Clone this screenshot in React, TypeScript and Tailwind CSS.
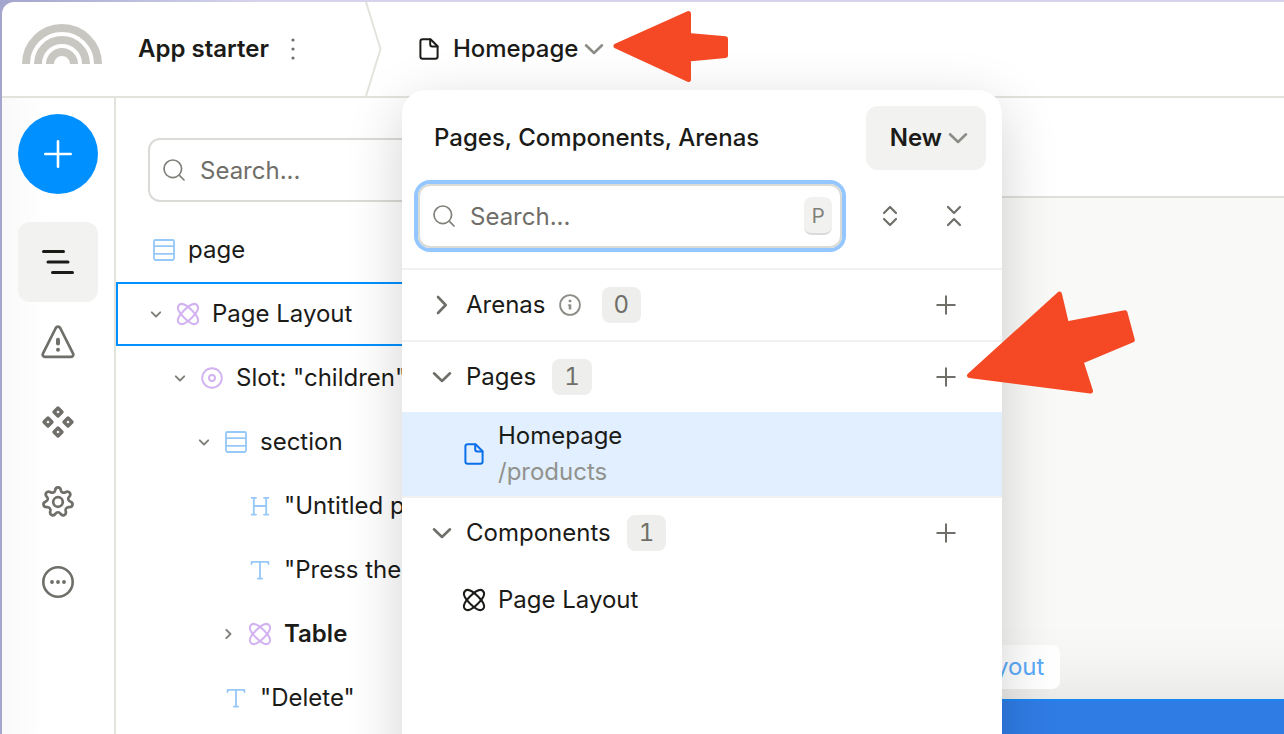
import type { ReactNode } from "react";

type IconProps = { className?: string };

function Svg({ className, box, children, width = 2 }: { className?: string; box: string; children: ReactNode; width?: number }) {
  return (
    <svg
      viewBox={box}
      className={className}
      fill="none"
      stroke="currentColor"
      strokeWidth={width}
      strokeLinecap="round"
      strokeLinejoin="round"
      aria-hidden="true"
    >
      {children}
    </svg>
  );
}

const Logo = () => (
  <svg viewBox="0 0 80 40" className="h-10 w-20 shrink-0" fill="none" stroke="#c8c7c1" strokeWidth="8" aria-hidden="true">
    <path d="M4 40a36 36 0 0 1 72 0" />
    <path d="M16 40a24 24 0 0 1 48 0" />
    <path d="M28 40a12 12 0 0 1 24 0" />
  </svg>
);

const FileIcon = ({ className }: IconProps) => (
  <Svg box="0 0 24 24" className={className}>
    <path d="M13.500 2.300H5.700a2.300 2.300 0 0 0-2.300 2.300v14.800a2.300 2.300 0 0 0 2.300 2.300h12.600a2.300 2.300 0 0 0 2.300-2.300V9.300z" />
    <path d="M13.200 2.500v5a2 2 0 0 0 2 2h5.200" />
  </Svg>
);

const SearchIcon = ({ className }: IconProps) => (
  <Svg box="0 0 24 24" className={className} width={1.7}>
    <circle cx="10.800" cy="10.800" r="8.800" />
    <path d="m17.200 17.200 4.800 4.800" />
  </Svg>
);

const ChevronWide = ({ className }: IconProps) => (
  <Svg box="0 0 24 24" className={className} width={2.6}>
    <path d="m4 8.300 8 7.700 8-7.700" />
  </Svg>
);

const ChevronRightWide = ({ className }: IconProps) => (
  <Svg box="0 0 24 24" className={className} width={2.6}>
    <path d="m8 4 7.700 8-7.700 8" />
  </Svg>
);

const ChevronSmall = ({ className }: IconProps) => (
  <Svg box="0 0 16 16" className={className} width={1.9}>
    <path d="m3.800 6.300 4.200 4.200 4.200-4.200" />
  </Svg>
);

const ChevronSmallRight = ({ className }: IconProps) => (
  <Svg box="0 0 16 16" className={className} width={1.9}>
    <path d="m6.300 3.800 4.200 4.200-4.200 4.200" />
  </Svg>
);

const PlusIcon = ({ className }: IconProps) => (
  <svg viewBox="0 0 20 20" className={className} fill="none" stroke="currentColor" strokeWidth="2" aria-hidden="true">
    <path d="M10 0.500v19M0.500 10h19" />
  </svg>
);

const orbit = "M-12.700 0C-12.700-4.200-5.500-5.400 0-5.400S12.700-4.200 12.700 0 5.500 5.400 0 5.400-12.700 4.200-12.700 0Z";

const AtomIcon = ({ className }: IconProps) => (
  <Svg box="0 0 24 24" className={className} width={2}>
    <path d={orbit} transform="translate(12 12) rotate(45)" />
    <path d={orbit} transform="translate(12 12) rotate(-45)" />
  </Svg>
);

const RowsIcon = ({ className }: IconProps) => (
  <Svg box="0 0 24 24" className={className} width={1.8}>
    <rect x="2" y="2" width="20" height="20" rx="1.500" />
    <path d="M2 8.200h20M2 15.800h20" />
  </Svg>
);

const SlotIcon = ({ className }: IconProps) => (
  <Svg box="0 0 24 24" className={className} width={1.9}>
    <circle cx="12" cy="12" r="9.800" />
    <circle cx="12" cy="12" r="3" />
  </Svg>
);

const HeadingIcon = ({ className }: IconProps) => (
  <Svg box="0 0 24 24" className={className} width={1.8}>
    <path d="M5.800 3.800v16.800M18.200 3.800v16.800M5.800 12h12.400M3.600 3.800H8M16 3.800h4.400M3.600 20.600H8M16 20.600h4.400" />
  </Svg>
);

const TextIcon = ({ className }: IconProps) => (
  <Svg box="0 0 24 24" className={className} width={1.8}>
    <path d="M3.600 6V3.800h16.800V6M12 3.800v16.800M9.800 20.600h4.400" />
  </Svg>
);

const InfoIcon = ({ className }: IconProps) => (
  <Svg box="0 0 24 24" className={className} width={1.8}>
    <circle cx="12" cy="12" r="9.900" />
    <path d="M12 11.500V16.500" strokeWidth="2.600" strokeLinecap="butt" />
    <path d="M12 6.800v2.400" strokeWidth="2.600" strokeLinecap="butt" />
    <path d="M10.300 12.100H12" strokeWidth="1.200" />
  </Svg>
);

const OutlineIcon = ({ className }: IconProps) => (
  <Svg box="0 0 40 40" className={className} width={3}>
    <path d="M5.500 9.500h20M10 20h20M14.500 30.500h20" />
  </Svg>
);

const WarningIcon = ({ className }: IconProps) => (
  <Svg box="0 0 40 40" className={className} width={2.7}>
    <path d="M17.800 6 4.900 31.600A2.200 2.200 0 0 0 6.900 34.800h26.200a2.200 2.200 0 0 0 2-3.200L22.200 6a2.500 2.500 0 0 0-4.400 0z" />
    <path d="M20 17.800v3.700" strokeWidth="4" />
    <path d="M20 27.800v.01" strokeWidth="4" />
  </Svg>
);

const DiamondsIcon = ({ className }: IconProps) => (
  <Svg box="0 0 40 40" className={className} width={3.4}>
    <path d="m20 6 4 4-4 4-4-4z" />
    <path d="m20 26 4 4-4 4-4-4z" />
    <path d="m10 16 4 4-4 4-4-4z" />
    <path d="m30 16 4 4-4 4-4-4z" />
  </Svg>
);

const GearIcon = ({ className }: IconProps) => (
  <Svg box="0 0 40 40" className={className} width={2.7}>
    <circle cx="20" cy="20" r="4.800" />
    <path d="M17.200 8.200C17.600 4.300 22.400 4.300 22.800 8.200C23.200 10.300 25.500 11.300 27.400 10.300C31 8.400 33.900 11.800 31.100 14.900C29.600 16.500 30.200 18.800 32.200 19.600C35.900 21 34.900 25.500 30.900 25.200C28.700 25 27.200 26.900 27.700 29C28.800 32.900 24.800 34.900 22.400 31.600C21.300 29.800 18.700 29.800 17.600 31.600C15.200 34.900 11.200 32.900 12.300 29C12.800 26.900 11.300 25 9.100 25.200C5.100 25.500 4.100 21 7.800 19.600C9.800 18.800 10.400 16.500 8.900 14.900C6.100 11.800 9 8.400 12.600 10.300C14.500 11.300 16.800 10.300 17.200 8.200Z" />
  </Svg>
);

const MoreIcon = ({ className }: IconProps) => (
  <Svg box="0 0 40 40" className={className} width={2.6}>
    <circle cx="20" cy="20" r="14.700" />
    <path d="M14 20h.01M20 20h.01M26 20h.01" strokeWidth="3.800" />
  </Svg>
);

const ExpandIcon = ({ className }: IconProps) => (
  <Svg box="0 0 24 24" className={className} width={2.2}>
    <path d="m6 9 6-6 6 6M6 15l6 6 6-6" />
  </Svg>
);

const CollapseIcon = ({ className }: IconProps) => (
  <Svg box="0 0 24 24" className={className} width={2.2}>
    <path d="m6 3 6 6 6-6M6 21l6-6 6 6" />
  </Svg>
);

type TreeKind = "rows" | "atom" | "slot" | "heading" | "text";
type TreeItem = { label: string; kind: TreeKind; indent: string; open?: boolean; closed?: boolean; selected?: boolean; bold?: boolean };

const tree: TreeItem[] = [
  { label: "page", kind: "rows", indent: "pl-[6px]" },
  { label: "Page Layout", kind: "atom", indent: "pl-[30px]", open: true, selected: true },
  { label: 'Slot: "children"', kind: "slot", indent: "pl-[54px]", open: true },
  { label: "section", kind: "rows", indent: "pl-[78px]", open: true },
  { label: '"Untitled page"', kind: "heading", indent: "pl-[102px]" },
  { label: '"Press the button"', kind: "text", indent: "pl-[102px]" },
  { label: "Table", kind: "atom", indent: "pl-[102px]", closed: true, bold: true },
  { label: '"Delete"', kind: "text", indent: "pl-[78px]" },
];

const kindIcon = {
  rows: <RowsIcon className="size-6 text-[#96c8f8]" />,
  atom: <AtomIcon className="size-6 overflow-visible text-[#d2b2f0]" />,
  slot: <SlotIcon className="size-6 text-[#d2b2f0]" />,
  heading: <HeadingIcon className="size-6 text-[#96c8f8]" />,
  text: <TextIcon className="size-6 text-[#96c8f8]" />,
};

function TreeRow({ item }: { item: TreeItem }) {
  return (
    <li>
      <button
        className={`flex h-16 w-full items-center gap-3 border-2 text-left whitespace-nowrap ${item.indent} ${item.selected ? "border-[#0090ff]" : "border-transparent"} ${item.bold ? "font-semibold" : ""}`}
      >
        <span className="size-4 shrink-0 text-[#80807b]">
          {item.open && <ChevronSmall className="size-4" />}
          {item.closed && <ChevronSmallRight className="size-4" />}
        </span>
        <span className="shrink-0">{kindIcon[item.kind]}</span>
        {item.label}
      </button>
    </li>
  );
}

function Count({ value }: { value: number }) {
  return <span className="flex h-9 items-center rounded-lg bg-[#eeeeec] px-3 text-[#6f6e69] tabular-nums">{value}</span>;
}

function Section({ title, count, open, info, children }: { title: string; count: number; open?: boolean; info?: boolean; children?: ReactNode }) {
  return (
    <section className="border-t-2 border-[#f1f1f0]">
      <div className="flex h-[70px] items-center pr-9 pl-7">
        <button className="flex items-center gap-3">
          {open ? <ChevronWide className="size-6 text-[#6f6e69]" /> : <ChevronRightWide className="size-6 text-[#6f6e69]" />}
          {title}
        </button>
        {info && <InfoIcon className="mr-1 ml-3 size-6 text-[#8d8d88]" />}
        <div className="ml-4">
          <Count value={count} />
        </div>
        <button aria-label={`Add to ${title}`} className="ml-auto flex size-10 items-center justify-center text-[#6f6e69]">
          <PlusIcon className="size-5" />
        </button>
      </div>
      {children}
    </section>
  );
}

function PagesPopover() {
  return (
    <div className="absolute top-[88px] left-[400px] z-20 flex h-[720px] w-[600px] flex-col rounded-[24px] bg-white shadow-[0_16px_56px_rgba(0,0,0,0.18)]">
      <div className="flex items-center justify-between p-4 pb-[14px] pl-8">
        <h2 className="font-medium">Pages, Components, Arenas</h2>
        <button className="flex h-16 items-center gap-1 rounded-xl bg-[#f2f2f0] pr-4 pl-6 font-semibold">
          New
          <ChevronWide className="size-6 text-[#8d8d88]" />
        </button>
      </div>
      <div className="flex items-center px-4 pb-5">
        <label className="mr-4 flex h-16 min-w-0 flex-1 items-center rounded-xl border-2 border-[#dadad6] px-2 pl-3 ring-4 ring-[#94c6ff]">
          <SearchIcon className="size-6 shrink-0 text-[#80807b]" />
          <input
            aria-label="Search pages"
            placeholder="Search..."
            className="ml-[14px] min-w-0 flex-1 pt-[2px] outline-none placeholder:text-[#6f6e69]"
          />
          <kbd className="flex h-[38px] w-7 items-center justify-center rounded-lg border-b-2 border-[#dadad8] bg-[#f1f1ef] pt-[2px] font-['Roboto',sans-serif] text-xl text-[#80807b]">
            P
          </kbd>
        </label>
        <button aria-label="Expand all" className="flex size-16 items-center justify-center text-[#6f6e69]">
          <ExpandIcon className="size-6" />
        </button>
        <button aria-label="Collapse all" className="flex size-16 items-center justify-center text-[#6f6e69]">
          <CollapseIcon className="size-6" />
        </button>
      </div>
      <Section title="Arenas" count={0} info />
      <Section title="Pages" count={1} open>
        <button className="flex w-full items-center gap-3 bg-[#e1efff] py-[6px] pl-[60px] text-left leading-9">
          <FileIcon className="size-6 text-[#0a6fe8]" />
          <span className="flex flex-col">
            <span>Homepage</span>
            <span className="text-[#92928d]">/products</span>
          </span>
        </button>
      </Section>
      <Section title="Components" count={1} open>
        <button className="flex h-16 w-full items-center gap-3 pl-[60px] text-left">
          <AtomIcon className="size-6 overflow-visible" />
          Page Layout
        </button>
      </Section>
    </div>
  );
}

const railButton = "flex size-20 items-center justify-center rounded-xl text-[#6f6e69]";

export default function App() {
  return (
    <div className="h-screen overflow-hidden bg-linear-to-r from-[#a3a5cd] to-[#d6d4ec] to-20% pt-[2px] pl-[2px] font-['Inter',sans-serif] text-2xl text-[#1b1b18]">
      <div className="relative flex h-full flex-col overflow-hidden rounded-tl-xl bg-white">
        <header className="flex h-24 shrink-0 items-center border-b-2 border-[#e3e3de] pl-5">
          <div className="-mt-[10px]">
            <Logo />
          </div>
          <h1 className="ml-9 font-semibold">App starter</h1>
          <button aria-label="Project menu" className="ml-3 flex h-10 w-6 items-center justify-center text-[#6f6e69]">
            <svg viewBox="0 0 24 24" className="size-6" fill="currentColor" aria-hidden="true">
              <circle cx="12" cy="3" r="1.600" />
              <circle cx="12" cy="12" r="1.600" />
              <circle cx="12" cy="21" r="1.600" />
            </svg>
          </button>
          <svg viewBox="0 0 18 94" className="ml-[60px] h-[94px] w-[18px] shrink-0" fill="none" stroke="#e3e3de" strokeWidth="2" aria-hidden="true">
            <path d="M1 0l14.500 47L1 94" />
          </svg>
          <button className="ml-[34px] flex items-center font-medium">
            <FileIcon className="mr-3 size-6" />
            Homepage
            <ChevronWide className="ml-1 size-6 text-[#8d8d88]" />
          </button>
        </header>

        <div className="flex min-h-0 flex-1">
          <nav className="flex w-[114px] shrink-0 flex-col items-start border-r-2 border-[#e3e3de] bg-linear-to-r from-[#f9f9f9] to-white to-40% p-4">
            <button aria-label="Add" className="mb-7 flex size-20 items-center justify-center rounded-full bg-[#0090ff] text-white">
              <Svg box="0 0 28 28" className="size-7" width={2.6}>
                <path d="M14 1.300v25.400M1.300 14h25.400" />
              </Svg>
            </button>
            <button aria-label="Outline" className="flex size-20 items-center justify-center rounded-xl bg-[#f2f2f0] text-[#1b1b18]">
              <OutlineIcon className="size-10" />
            </button>
            <button aria-label="Issues" className={railButton}>
              <WarningIcon className="size-10" />
            </button>
            <button aria-label="Components" className={railButton}>
              <DiamondsIcon className="size-10" />
            </button>
            <button aria-label="Settings" className={railButton}>
              <GearIcon className="size-10" />
            </button>
            <button aria-label="More" className={railButton}>
              <MoreIcon className="size-10" />
            </button>
          </nav>

          <aside className="w-[600px] shrink-0 overflow-hidden pt-10">
            <label className="mx-8 mb-4 flex h-16 items-center rounded-xl border-2 border-[#dadad6] pl-3">
              <SearchIcon className="size-6 shrink-0 text-[#80807b]" />
              <input
                aria-label="Search elements"
                placeholder="Search..."
                className="ml-[14px] min-w-0 flex-1 pt-[2px] outline-none placeholder:text-[#6f6e69]"
              />
            </label>
            <ul>
              {tree.map((item) => (
                <TreeRow key={item.label} item={item} />
              ))}
            </ul>
          </aside>

          <main className="flex min-w-0 flex-1 flex-col overflow-hidden">
            <div className="h-[100px] shrink-0 border-b-2 border-[#dfdfdc]" />
            <div className="flex flex-1 flex-col items-start bg-[#f9f9f7] pt-[447px] pl-[172px]">
              <span className="relative z-10 mb-[10px] flex h-11 shrink-0 items-center rounded-lg bg-white px-4 whitespace-nowrap text-[#5aaaf8]">
                Page Layout
              </span>
              <div className="min-h-[160px] w-[1200px] flex-1 border-t-2 border-[#1b86f0] bg-[#307ce5] shadow-[0_0_80px_rgba(0,0,0,0.12)]" />
            </div>
          </main>
        </div>

        <PagesPopover />

        <svg
          viewBox="0 0 116 72"
          className="pointer-events-none absolute top-[8px] left-[611px] z-30 h-[72px] w-[116px]"
          fill="#f54824"
          stroke="#f54824"
          strokeWidth="5"
          strokeLinejoin="round"
          aria-hidden="true"
        >
          <path d="M3 36 75.500 3.500V25.500L112.500 28.800V45.500L75.500 49V69.500Z" />
        </svg>
        <svg
          viewBox="0 0 172 106"
          className="pointer-events-none absolute top-[288px] left-[963px] z-30 h-[106px] w-[172px]"
          fill="#f54824"
          stroke="#f54824"
          strokeWidth="5"
          strokeLinejoin="round"
          aria-hidden="true"
        >
          <path d="M4.500 85.500 94.500 4.200 101.500 34 160 22.800 167.300 50 116 71.500 125.500 101Z" />
        </svg>
      </div>
    </div>
  );
}
